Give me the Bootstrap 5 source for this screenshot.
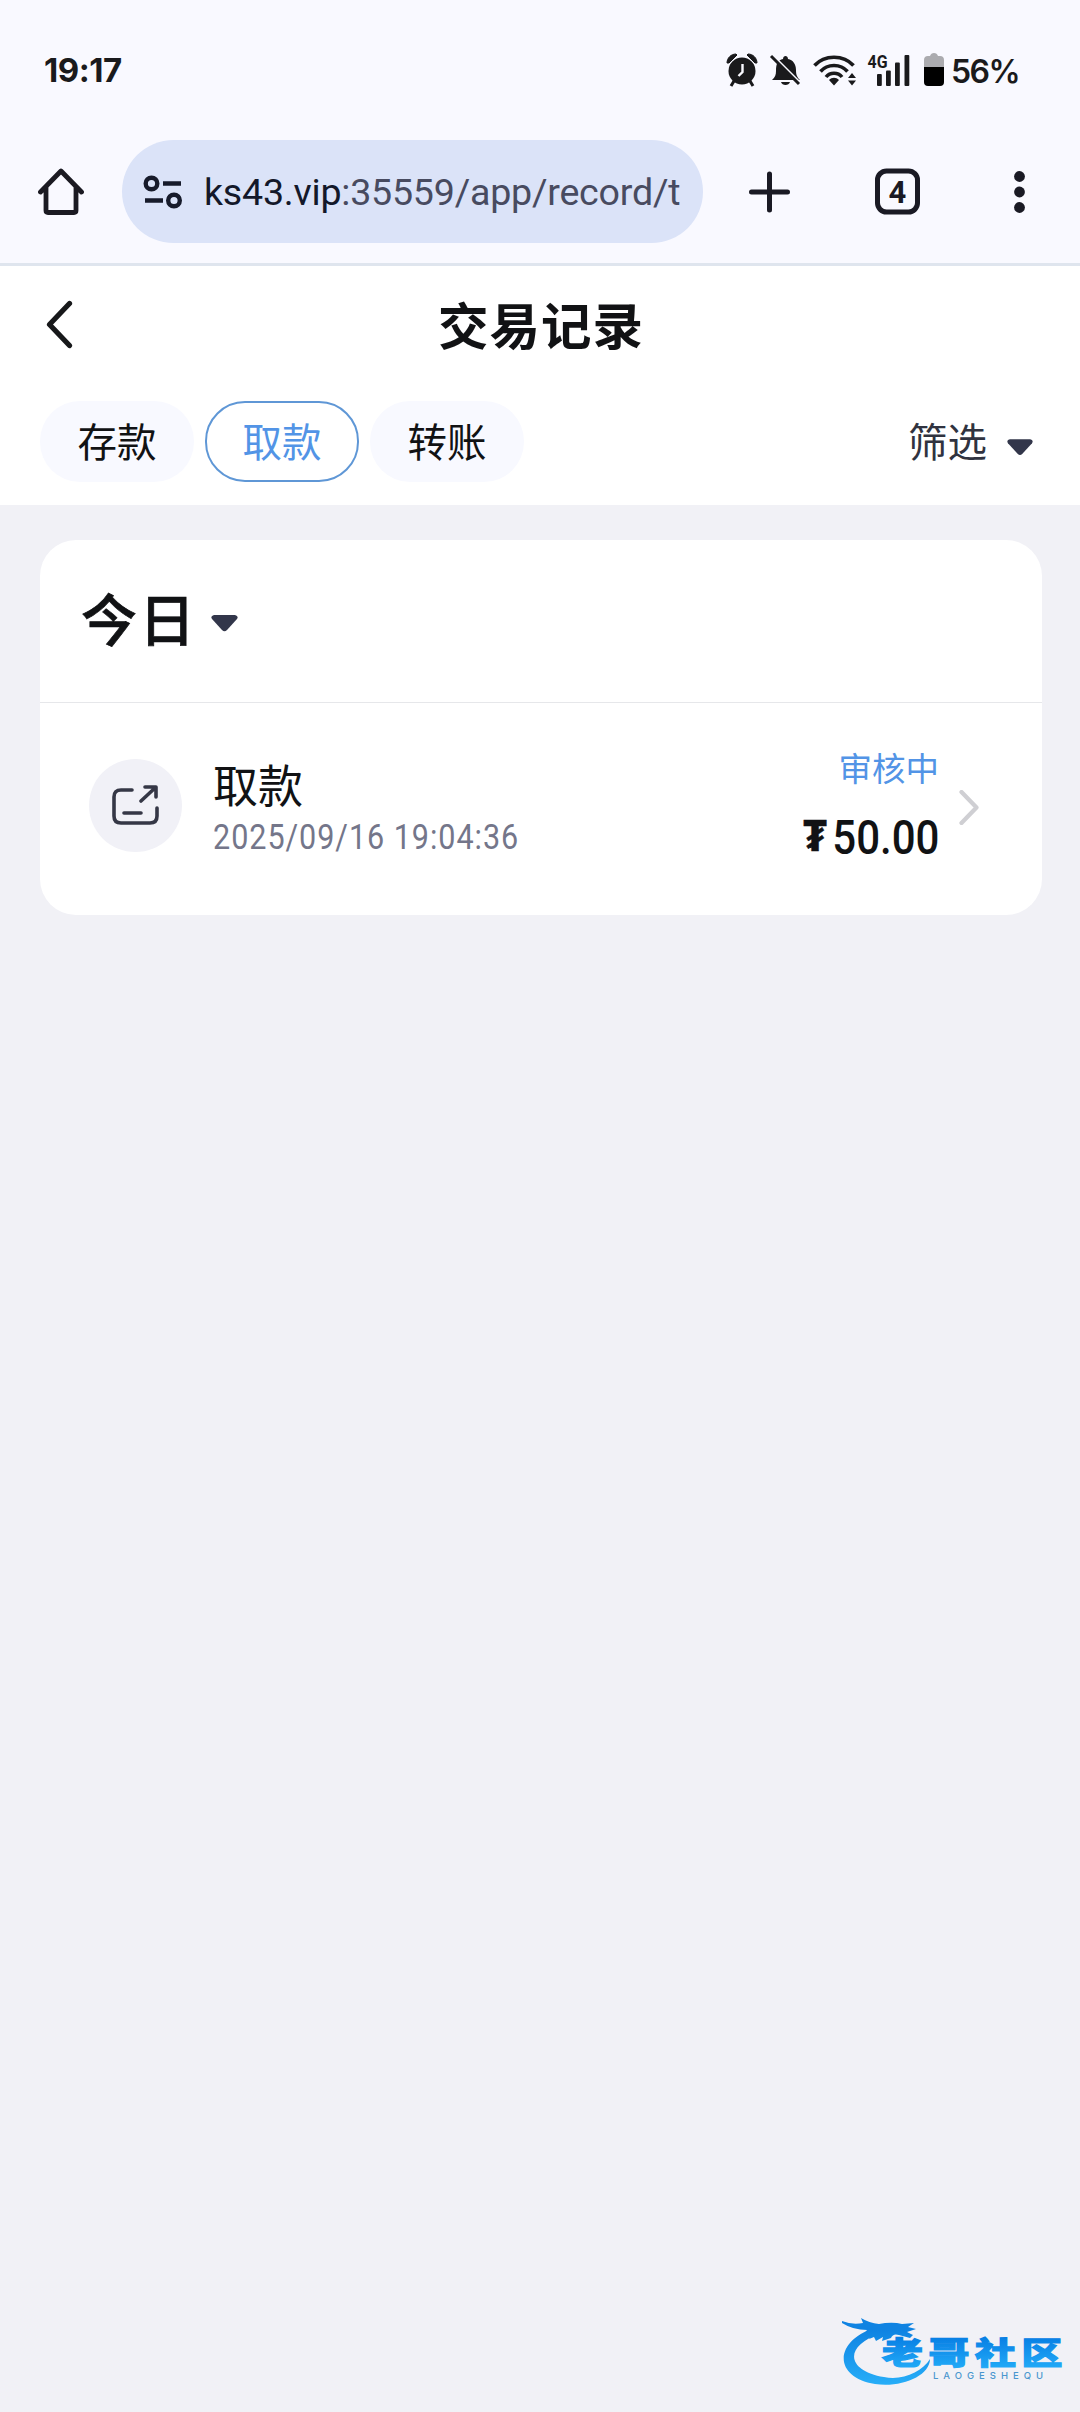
<!DOCTYPE html>
<html lang="zh-CN">
<head>
<meta charset="utf-8">
<meta name="viewport" content="width=device-width, initial-scale=1">
<title>交易记录</title>
<link href="https://cdn.jsdelivr.net/npm/bootstrap@5.3.0/dist/css/bootstrap.min.css" rel="stylesheet">
<style>
  body{font-family:Roboto,"Noto Sans CJK SC",sans-serif;background:#f1f1f6;color:#111214;min-height:2412px;overflow-x:hidden}
  svg{display:block;flex:none}
  .chrome-top{background:#f9f9ff;height:266px;border-bottom:3px solid #dfe5ee}
  .status-bar{height:140px;padding:0 61px 0 44px;font-family:Inter,sans-serif;font-weight:700;font-size:33px;line-height:1;color:#1a1a1c}
  .clock{letter-spacing:-.5px;padding-top:1px}
  .status-icons{height:46px}
  .battery-text{font-size:32px;font-weight:600;margin-left:7px;letter-spacing:-1.6px;padding-top:3px}
  .tool-bar{height:103px;padding-left:38px}
  .omnibox{width:581px;height:103px;border-radius:52px;background:#dbe3f8;margin-left:38px;padding-left:21px}
  .address{font-size:37.6px;line-height:1;margin-left:21px;color:#484b60;letter-spacing:-.22px;padding-top:2px}
  .address b{font-weight:400;color:#13182a}
  .page-head{height:239px}
  .title-row{height:119px;padding-left:46px}
  .page-title{font-size:50.5px;font-weight:700;line-height:1;letter-spacing:1px;left:0;right:0;padding:5px 0 0 2px}
  .tab-row{height:81px;margin-top:16px;padding:0 47px 0 40px;gap:11px}
  .tab-chip{width:154px;height:81px;border-radius:40px;background:#f8f9ff;font-size:39.5px;line-height:1;border:0;color:#111214;padding:5px 0 0}
  .tab-chip.active{background:#fff;border:2px solid #5f97d6;color:#5294e6}
  .filter-link{font-size:39.5px;line-height:1;color:#303340;gap:20px;padding-top:5px}
  .filter-link svg{margin-top:6px}
  .record-card{margin:35px 38px 0 40px;height:375px;border-radius:36px;background:#fff}
  .day-row{height:163px;border-bottom:1px solid #e6e7ea;padding-left:41px}
  .day-label{font-size:56px;font-weight:500;line-height:1;letter-spacing:2px;padding-top:2px;-webkit-text-stroke:.7px #111214}
  .day-caret{margin-left:14px}
  .entry{height:212px;padding:0 63px 0 49px}
  .entry-icon{width:93px;height:93px;background:#f1f1f7;margin-bottom:7px}
  .entry-text{padding-left:7px}
  .entry-name{font-size:45px;line-height:48px}
  .entry-date{font-size:35px;line-height:1;color:#74768a;letter-spacing:1.1px;white-space:nowrap;transform:scaleX(.873);transform-origin:left}
  .entry-right{margin:0 20px 6px 0}
  .entry-state{font-size:33.5px;line-height:1;color:#5294e6;margin-bottom:27px;padding-top:3px}
  .entry-sum{font-size:48px;font-weight:500;line-height:1;transform:scaleX(.875);transform-origin:right;white-space:nowrap}
  .coin{display:inline-block;font-family:"Noto Sans","DejaVu Sans",sans-serif;font-weight:800;font-size:42px;margin-right:6px;line-height:1;-webkit-text-stroke:.5px #111214;transform:translateY(-3px) scaleX(1.15);transform-origin:right}
  .watermark{left:840px;top:2310px}
</style>
<script src="https://cdn.jsdelivr.net/npm/bootstrap@5.3.0/dist/js/bootstrap.bundle.min.js"></script>
</head>
<body class="position-relative">
<header class="chrome-top">
  <div class="status-bar d-flex align-items-center justify-content-between">
    <span class="clock">19:17</span>
    <div class="status-icons d-flex align-items-center">
      <svg width="218" height="46" viewBox="726 47 218 46" fill="#1a1a1c">
        <!-- alarm -->
        <circle cx="742" cy="71" r="13.5"/>
        <path d="M727 63c0-5 4-9 9-9l1 1-8 8zM757 63c0-5-4-9-9-9l-1 1 8 8z" stroke="#1a1a1c"/>
        <path d="M734 81l-3 5M750 81l3 5" stroke="#1a1a1c" stroke-width="3"/>
        <path d="M742.500 64v8l-4 4" fill="none" stroke="#f9f9ff" stroke-width="2.400"/>
        <!-- muted bell -->
        <path d="M772 80c3-3 4-5 4-9 0-8 2-11 7-12 0-4 5-4 5 0 5 1 8 5 8 11 0 5 1 7 4 10zM781 82h9c-1 4-8 4-9 0z"/>
        <path d="M773 56l28 28" stroke="#f9f9ff" stroke-width="3"/>
        <path d="M771 56l28 28" stroke="#1a1a1c" stroke-width="3"/>
        <!-- wifi -->
        <g fill="none" stroke="#1a1a1c" stroke-width="3.600"><path d="M814.500 65.500c10-11 29-11 39 0M820.500 71.500c7-8 20-8 27 0M826 77c4-5 12-5 16 0"/></g>
        <path d="M829 80c3-3 7-3 10 0l-5 5.500zM848 78l4-5 4 5zM848 80.500l4 5 4-5z"/>
        <!-- signal -->
        <text x="867.500" y="68" font-family="Roboto,sans-serif" font-size="18" font-weight="700" textLength="20" lengthAdjust="spacingAndGlyphs">4G</text>
        <rect x="877" y="74" width="4.800" height="12" rx="1"/><rect x="886" y="70.500" width="4.800" height="15.500" rx="1"/><rect x="895" y="62.500" width="4.800" height="23.500" rx="1"/><rect x="904.500" y="55" width="4.800" height="31" rx="1"/>
        <!-- battery -->
        <path d="M924 67v-7q0-4 4-4h2q1-3 4-3t4 3h2q4 0 4 4v7z" fill="#ababaf"/><path d="M924 67h20v15q0 4-4 4h-12q-4 0-4-4z" fill="#000"/>
      </svg>
      <span class="battery-text">56%</span>
    </div>
  </div>
  <div class="tool-bar d-flex align-items-center">
    <svg width="46" height="47" viewBox="0 0 46 47" fill="none" stroke="#1b1a22" stroke-width="4.800" stroke-linejoin="round" stroke-linecap="round"><path d="M2.500 24L23 3l20.500 21M8 19v23.500q0 2 2 2h26q2 0 2-2V19"/></svg>
    <div class="omnibox d-flex align-items-center overflow-hidden">
      <svg width="40" height="34" viewBox="0 0 40 34" fill="none" stroke="#171b2b" stroke-width="4.400"><circle cx="8.500" cy="8.500" r="5.800"/><circle cx="31" cy="25.500" r="5.800"/><path d="M20 8.500h18M2 25.500h18"/></svg>
      <span class="address text-nowrap"><b>ks43.vip</b>:35559/app/record/t</span>
    </div>
    <svg width="330" height="48" viewBox="703 167.500 330 48">
      <path d="M769.500 173.500v36M751.500 191.500h36" stroke="#1a1a24" stroke-width="5" stroke-linecap="round"/>
      <rect x="877.500" y="170.500" width="40" height="41" rx="9" fill="none" stroke="#1a1a24" stroke-width="5"/>
      <text x="897.500" y="202" text-anchor="middle" font-family="Roboto,sans-serif" font-size="31" font-weight="700" fill="#1a1a24">4</text>
      <g fill="#1a1a24"><circle cx="1019.500" cy="176" r="5.400"/><circle cx="1019.500" cy="191.500" r="5.400"/><circle cx="1019.500" cy="207" r="5.400"/></g>
    </svg>
  </div>
</header>

<section class="page-head bg-white">
  <div class="title-row d-flex align-items-center position-relative">
    <svg class="mb-1" width="28" height="50" viewBox="0 0 28 50" fill="none" stroke="#17181a" stroke-width="5.200" stroke-linecap="round" stroke-linejoin="round"><path d="M23.500 4.500L3.500 25.500l20 21"/></svg>
    <h1 class="page-title position-absolute text-center m-0">交易记录</h1>
  </div>
  <nav class="tab-row d-flex align-items-center">
    <button class="tab-chip">存款</button>
    <button class="tab-chip active">取款</button>
    <button class="tab-chip">转账</button>
    <div class="filter-link d-flex align-items-center ms-auto">筛选
      <svg width="26" height="17" viewBox="0 0 27 17"><path d="M3 0h21q4 1 2 4L16 15q-2.500 2.500-5 0L1 4Q-1 1 3 0z" fill="#32364a"/></svg>
    </div>
  </nav>
</section>

<main class="record-card">
  <div class="day-row d-flex align-items-center">
    <h2 class="day-label m-0">今日</h2>
    <svg class="day-caret mt-1" width="27" height="17" viewBox="0 0 27 17"><path d="M3 0h21q4 1 2 4L16 15q-2.500 2.500-5 0L1 4Q-1 1 3 0z" fill="#32364a"/></svg>
  </div>
  <div class="entry d-flex align-items-center">
    <div class="entry-icon rounded-circle d-flex align-items-center justify-content-center">
      <svg width="47" height="41" viewBox="0 0 47 41" fill="none" stroke="#353746" stroke-width="3.600" stroke-linecap="round" stroke-linejoin="round"><path d="M20 5H9q-7 0-7 7v19q0 7 7 7h29q7 0 7-7v-8M12 28h17M29 16L43.500 2.500M33 2h11v10"/></svg>
    </div>
    <div class="flex-grow-1 entry-text">
      <div class="ms-4 entry-name">取款</div>
      <div class="ms-4 mt-2 entry-date">2025/09/16 19:04:36</div>
    </div>
    <div class="text-end entry-right">
      <div class="entry-state">审核中</div>
      <div class="entry-sum"><span class="coin">₮</span>50.00</div>
    </div>
    <svg class="mb-1" width="20" height="35" viewBox="0 0 20 35" fill="none" stroke="#cfcfd3" stroke-width="4.200" stroke-linecap="round" stroke-linejoin="round"><path d="M2.500 2l15 15.500L2.500 33"/></svg>
  </div>
</main>

<svg class="watermark position-absolute" width="240" height="84" viewBox="840 2310 240 84">
  <defs><linearGradient id="wave" gradientUnits="userSpaceOnUse" x1="0" y1="2330" x2="0" y2="2385"><stop offset="0" stop-color="#0f83e2"/><stop offset="1" stop-color="#27aef8"/></linearGradient>
  <linearGradient id="ink" x1="0" y1="0" x2="0" y2="1"><stop offset=".2" stop-color="#087fe4"/><stop offset="1" stop-color="#25b0fa"/></linearGradient></defs>
  <g fill="url(#wave)">
    <path d="M880 2326C833 2339 832 2377 875 2384C901 2388 930 2376 930 2359C922 2372 902 2381 884 2377C847 2371 842 2346 882 2333z"/>
    <path d="M842 2321q10 4 21 2l-2-5q8 5 18 6l6-1q10-1 17 1l12-1-6 4 8 2-9 3 6 3-3 3-11-3q-6-2-8 3l-9 3 1-4-7 4-2-4-5 2 3-6-8 1 3-4q-14 0-25-7z"/>
  </g>
  <text transform="translate(882 2364) scale(1.34 1)" x="0" y="0" font-family="'Noto Sans CJK SC',sans-serif" font-weight="900" font-size="30.500" letter-spacing="4.200" fill="url(#ink)" stroke="url(#ink)" stroke-width="1.200">老哥社区</text>
  <text x="933" y="2379" font-family="Inter,sans-serif" font-size="9.500" font-weight="500" textLength="110" fill="#4b97cf">LAOGESHEQU</text>
</svg>
</body>
</html>
